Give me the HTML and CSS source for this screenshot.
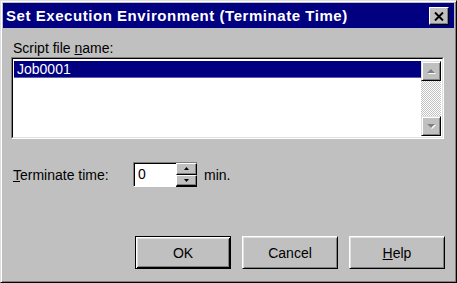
FILE: index.html
```html
<!DOCTYPE html>
<html>
<head>
<meta charset="utf-8">
<link rel="stylesheet" href="styles.css">
</head>
<body>
<div class="window">
  <div class="titlebar">
    <span class="title">Set Execution Environment (Terminate Time)</span>
    <div class="close-btn">
      <svg width="10" height="9" viewBox="0 0 10 9"><path d="M1 0.5 L9 8.5 M9 0.5 L1 8.5" stroke="#000" stroke-width="2" fill="none"/></svg>
    </div>
  </div>
  <div class="body">
    <div class="label">Script file <u>n</u>ame:</div>
    <div class="listbox">
      <div class="list-items">
        <div class="item selected">Job0001</div>
      </div>
      <div class="scrollbar">
        <div class="sb-btn">
          <svg width="11" height="7" viewBox="0 0 11 7"><path d="M2 6 L10 6 L6 2 Z" fill="#fff"/><path d="M1 5 L9 5 L5 1 Z" fill="#808080"/></svg>
        </div>
        <div class="sb-track"></div>
        <div class="sb-btn">
          <svg width="11" height="7" viewBox="0 0 11 7"><path d="M2 2 L10 2 L6 6 Z" fill="#fff"/><path d="M1 1 L9 1 L5 5 Z" fill="#808080"/></svg>
        </div>
      </div>
    </div>
    <div class="time-row">
      <div class="time-label"><u>T</u>erminate time:</div>
      <div class="spin">
        <div class="spin-input">0</div>
        <div class="spin-btns">
          <div class="spin-btn"><svg width="5" height="3" viewBox="0 0 5 3"><path d="M0 3 L5 3 L2.5 0 Z" fill="#000"/></svg></div>
          <div class="spin-btn"><svg width="5" height="3" viewBox="0 0 5 3"><path d="M0 0 L5 0 L2.5 3 Z" fill="#000"/></svg></div>
        </div>
      </div>
      <span class="unit">min.</span>
    </div>
    <div class="buttons">
      <div class="btn default"><span>OK</span></div>
      <div class="btn"><span>Cancel</span></div>
      <div class="btn"><span><u>H</u>elp</span></div>
    </div>
  </div>
</div>
</body>
</html>
```
FILE: styles.css
```css
* { box-sizing: border-box; }
html, body { margin: 0; padding: 0; }
body {
  width: 457px;
  height: 283px;
  overflow: hidden;
  font-family: "Liberation Sans", Arial, sans-serif;
  font-size: 14px;
  line-height: 16px;
  color: #000;
}
.window {
  width: 457px;
  height: 283px;
  background: #c0c0c0;
  border: 1px solid;
  border-color: #dfdfdf #000 #000 #dfdfdf;
  box-shadow: inset 1px 1px #fff, inset -1px -1px #808080;
  padding: 2px;
  display: flex;
  flex-direction: column;
}
.titlebar {
  height: 25px;
  background: #000080;
  display: flex;
  align-items: center;
  justify-content: space-between;
  padding: 0 5px 0 3px;
}
.title {
  color: #fff;
  font-weight: bold;
  font-size: 15px;
  letter-spacing: 0.55px;
}
.close-btn {
  width: 20px;
  height: 18px;
  background: #c0c0c0;
  border: 1px solid;
  border-color: #fff #000 #000 #fff;
  box-shadow: inset -1px -1px #808080;
  display: flex;
  align-items: center;
  justify-content: center;
  margin-top: 1px;
}
.body {
  flex: 1;
  display: flex;
  flex-direction: column;
  padding: 12px 0 0 8px;
}
.label {
  margin-left: 2px;
  margin-bottom: 1px;
}
.listbox {
  width: 433px;
  height: 82px;
  border: 1px solid;
  border-color: #808080 #fff #fff #808080;
  display: flex;
}
.list-items {
  flex: 1;
  background: #fff;
  border-top: 1px solid #000;
  border-left: 1px solid #000;
  border-bottom: 1px solid #dfdfdf;
  padding-top: 2px;
  padding-left: 1px;
}
.item {
  height: 17px;
  padding-left: 3px;
  line-height: 17px;
}
.item.selected {
  background: #000080;
  color: #fff;
  border-bottom: 1px solid #5c5cb0;
  line-height: 16px;
}
.scrollbar {
  width: 22px;
  display: flex;
  flex-direction: column;
  border-top: 1px solid #000;
  border-right: 1px solid #dfdfdf;
  border-bottom: 1px solid #dfdfdf;
  padding: 2px 1px 1px 0;
  background: #fff;
}
.sb-btn {
  height: 20px;
  background: #c0c0c0;
  border: 1px solid;
  border-color: #dfdfdf #000 #000 #dfdfdf;
  box-shadow: inset 1px 1px #fff, inset -1px -1px #808080;
  display: flex;
  align-items: center;
  justify-content: center;
}
.sb-track {
  flex: 1;
  background-image: conic-gradient(#fff 25%, #c0c0c0 0 50%, #fff 0 75%, #c0c0c0 0);
  background-size: 2px 2px;
}
.time-row {
  display: flex;
  align-items: center;
  margin-top: 23px;
  margin-left: 2px;
  height: 25px;
}
.time-label {
  width: 120px;
}
.spin {
  display: flex;
  height: 25px;
}
.spin-input {
  width: 43px;
  background: #fff;
  border: 1px solid;
  border-color: #808080 transparent #fff #808080;
  box-shadow: inset 1px 1px #000;
  padding: 3px 0 0 4px;
  border-right: none;
}
.spin-btns {
  width: 21px;
  display: flex;
  flex-direction: column;
  border-top: 1px solid #808080;
  border-bottom: 1px solid #000;
}
.spin-btn {
  flex: 1;
  background: #c0c0c0;
  border: 1px solid;
  border-color: #fff #000 #000 #fff;
  box-shadow: inset -1px -1px #808080;
  display: flex;
  align-items: center;
  justify-content: center;
}
.unit {
  margin-left: 7px;
}
.buttons {
  display: flex;
  gap: 11px;
  margin-top: 49px;
  margin-left: 124px;
}
.btn {
  width: 96px;
  height: 33px;
  background: #c0c0c0;
  border: 1px solid;
  border-color: #fff #000 #000 #fff;
  box-shadow: inset 1px 1px #dfdfdf, inset -1px -1px #808080;
  display: flex;
  align-items: center;
  justify-content: center;
}
.btn.default {
  border: 1px solid #000;
  box-shadow: inset 1px 1px #fff, inset -1px -1px #000, inset 2px 2px #dfdfdf, inset -2px -2px #808080;
}
```
